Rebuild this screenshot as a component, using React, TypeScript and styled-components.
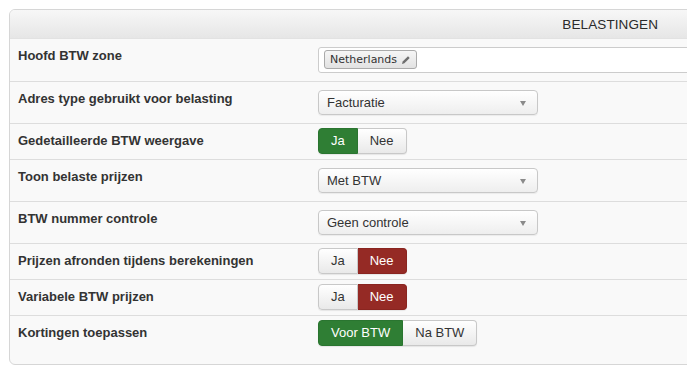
import React from "react";
import styled, { createGlobalStyle } from "styled-components";

const Global = createGlobalStyle`
  html, body { margin: 0; padding: 0; background: #ffffff; }
  body { font-family: "Liberation Sans", Arial, sans-serif; overflow: hidden; }
`;

const Wrapper = styled.div`
  width: 687px;
  height: 366px;
  overflow: hidden;
  padding: 9px 0 0 9px;
  box-sizing: border-box;
`;

const Panel = styled.div`
  width: 720px;
  border: 1px solid #d6d6d6;
  border-radius: 6px;
  background: #f9f9f9;
  overflow: hidden;
`;

const Header = styled.div`
  height: 28px;
  border-bottom: 1px solid #e2e2e2;
  background: linear-gradient(#f7f7f7, #e6e6e6);
  display: flex;
  align-items: center;
  justify-content: flex-end;
  padding-right: 72px;
  font-size: 13.5px;
  color: #2a2a2a;
  letter-spacing: 0.1px;
`;

const Row = styled.div<{ $last?: boolean }>`
  display: flex;
  align-items: flex-start;
  padding: 4px 0 ${(p) => (p.$last ? "18px" : "5px")} 8px;
  border-bottom: ${(p) => (p.$last ? "none" : "1px solid #dddddd")};
`;

const Label = styled.div`
  width: 300px;
  flex: none;
  padding-top: 4px;
  font-size: 13px;
  line-height: 18px;
  font-weight: bold;
  color: #333;
`;

const Control = styled.div`
  flex: 1;
  display: flex;
`;

const TagInput = styled.div`
  flex: 1;
  height: 26px;
  box-sizing: border-box;
  margin: 4px 0 3px;
  border: 1px solid #cccccc;
  border-radius: 3px;
  background: #ffffff;
  padding: 2px 5px;
  display: flex;
  align-items: flex-start;
`;

const Chip = styled.span`
  display: inline-flex;
  align-items: center;
  gap: 4px;
  height: 19px;
  box-sizing: border-box;
  padding: 0 5px 0 5px;
  border: 1px solid #aaaaaa;
  border-radius: 3px;
  background: linear-gradient(#f6f6f6, #e2e2e2);
  font-family: "DejaVu Sans", Verdana, sans-serif;
  font-size: 11px;
  color: #333;
`;

const Select = styled.div`
  width: 220px;
  height: 25px;
  box-sizing: border-box;
  margin: 4px 0 3px;
  border: 1px solid #c8c8c8;
  border-radius: 4px;
  background: linear-gradient(#ffffff, #eeeeee);
  box-shadow: 0 1px 1px rgba(0, 0, 0, 0.06);
  padding: 0 8px;
  display: flex;
  align-items: center;
  justify-content: space-between;
  font-size: 13px;
  color: #333;
`;

const Caret = styled.span`
  width: 0;
  height: 0;
  margin-top: 2px;
  margin-right: 3px;
  border-left: 3.5px solid transparent;
  border-right: 3.5px solid transparent;
  border-top: 5px solid #8a8a8a;
`;

const Group = styled.div`
  display: flex;
  border-radius: 4px;
  box-shadow: 0 1px 1px rgba(0, 0, 0, 0.08);
`;

const Btn = styled.span<{ $active?: "green" | "red" }>`
  height: 26px;
  box-sizing: border-box;
  padding: 0 12px;
  line-height: 24px;
  font-size: 13px;
  border: 1px solid
    ${(p) => (p.$active === "green" ? "#2a7530" : p.$active === "red" ? "#8a2520" : "#c8c8c8")};
  background: ${(p) =>
    p.$active === "green"
      ? "#2f7e34"
      : p.$active === "red"
      ? "#952a25"
      : "linear-gradient(#ffffff, #e9e9e9)"};
  color: ${(p) => (p.$active ? "#ffffff" : "#333333")};
  &:first-child {
    border-radius: 4px 0 0 4px;
  }
  &:last-child {
    border-radius: 0 4px 4px 0;
  }
  & + & {
    border-left: none;
  }
`;

const Pencil = () => (
  <svg width="10" height="10" viewBox="0 0 10 10">
    <path d="M1 9 L1.7 6.6 L7 1.3 L8.7 3 L3.4 8.3 Z" fill="#6e6e6e" />
  </svg>
);

type Opt = { label: string; active?: "green" | "red" };

const Toggle = ({ options }: { options: Opt[] }) => (
  <Group>
    {options.map((o) => (
      <Btn key={o.label} $active={o.active}>
        {o.label}
      </Btn>
    ))}
  </Group>
);

const Dropdown = ({ value }: { value: string }) => (
  <Select>
    <span>{value}</span>
    <Caret />
  </Select>
);

export default function App() {
  return (
    <>
      <Global />
      <Wrapper>
        <Panel>
          <Header>BELASTINGEN</Header>
          <Row>
            <Label>Hoofd BTW zone</Label>
            <Control>
              <TagInput>
                <Chip>
                  Netherlands <Pencil />
                </Chip>
              </TagInput>
            </Control>
          </Row>
          <Row>
            <Label>Adres type gebruikt voor belasting</Label>
            <Control>
              <Dropdown value="Facturatie" />
            </Control>
          </Row>
          <Row>
            <Label>Gedetailleerde BTW weergave</Label>
            <Control>
              <Toggle options={[{ label: "Ja", active: "green" }, { label: "Nee" }]} />
            </Control>
          </Row>
          <Row>
            <Label>Toon belaste prijzen</Label>
            <Control>
              <Dropdown value="Met BTW" />
            </Control>
          </Row>
          <Row>
            <Label>BTW nummer controle</Label>
            <Control>
              <Dropdown value="Geen controle" />
            </Control>
          </Row>
          <Row>
            <Label>Prijzen afronden tijdens berekeningen</Label>
            <Control>
              <Toggle options={[{ label: "Ja" }, { label: "Nee", active: "red" }]} />
            </Control>
          </Row>
          <Row>
            <Label>Variabele BTW prijzen</Label>
            <Control>
              <Toggle options={[{ label: "Ja" }, { label: "Nee", active: "red" }]} />
            </Control>
          </Row>
          <Row $last>
            <Label>Kortingen toepassen</Label>
            <Control>
              <Toggle options={[{ label: "Voor BTW", active: "green" }, { label: "Na BTW" }]} />
            </Control>
          </Row>
        </Panel>
      </Wrapper>
    </>
  );
}
